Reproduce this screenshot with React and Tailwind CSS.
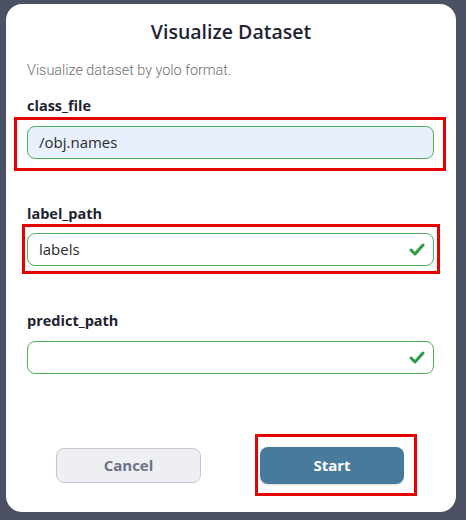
import React from "react";

function Check() {
  return (
    <svg width="16" height="13" viewBox="0 0 16 13" className="shrink-0">
      <polyline points="2,7 6,11 14,2" fill="none" stroke="#2e9a46" strokeWidth="3" strokeLinecap="round" strokeLinejoin="round" />
    </svg>
  );
}

function Label({ children }) {
  return (
    <div className="ml-[21px] h-[20px] text-[14.5px] leading-[20px] font-bold text-[#1f2330]" style={{ fontFamily: "'Open Sans', sans-serif" }}>
      {children}
    </div>
  );
}

export default function App() {
  return (
    <div className="w-[466px] h-[520px] bg-[#4b5063] overflow-hidden pt-[4px] pl-[6px]">
      <div className="w-[450px] h-[508px] bg-white rounded-[16px] flex flex-col" style={{ fontFamily: "'Open Sans', sans-serif" }}>
        <div className="mt-[16px] h-[24px] text-center text-[19.5px] leading-[24px] font-semibold text-[#1f2533]">
          Visualize Dataset
        </div>
        <div className="mt-[18px] ml-[21px] h-[18px] text-[14.4px] leading-[18px] font-light text-[#6e6e6e]" style={{ fontFamily: "Roboto, sans-serif" }}>
          Visualize dataset by yolo format.
        </div>

        <div className="mt-[16px]">
          <Label>class_file</Label>
        </div>
        <div className="mt-[1px] ml-[8px] w-[432px] h-[54px] border-[3px] border-[#e60000] pt-[6px] pl-[10px]">
          <div className="w-[407px] h-[33px] rounded-[8px] border border-[#4caf5a] bg-[#e8f0fe] flex items-center px-[11px] text-[15px] text-[#2b2b2b]">
            /obj.names
          </div>
        </div>

        <div className="mt-[33px]">
          <Label>label_path</Label>
        </div>
        <div className="ml-[16px] w-[418px] h-[50px] border-[3px] border-[#e60000] pt-[6px] pl-[2px]">
          <div className="w-[407px] h-[33px] rounded-[8px] border border-[#4caf5a] bg-white flex items-center justify-between pl-[11px] pr-[8px] text-[15px] text-[#2b2b2b]">
            <span>labels</span>
            <Check />
          </div>
        </div>

        <div className="mt-[37px]">
          <Label>predict_path</Label>
        </div>
        <div className="mt-[10px] ml-[21px] w-[407px] h-[33px] rounded-[8px] border border-[#4caf5a] bg-white flex items-center justify-end pr-[8px]">
          <Check />
        </div>

        <div className="mt-[60px] flex items-center">
          <div className="ml-[50px] w-[145px] h-[35px] rounded-[8px] border border-[#c4c7d3] bg-[#eeeff3] flex items-center justify-center text-[15px] font-bold text-[#6c7287]">
            Cancel
          </div>
          <div className="ml-[54px] w-[162px] h-[62px] border-[3px] border-[#e60000] pt-[10px] pl-[2px]">
            <div className="w-[144px] h-[37px] rounded-[8px] bg-[#477a9b] flex items-center justify-center text-[15px] font-bold text-white shadow-[0_1px_2px_rgba(0,0,0,0.15)]">
              Start
            </div>
          </div>
        </div>
      </div>
    </div>
  );
}
